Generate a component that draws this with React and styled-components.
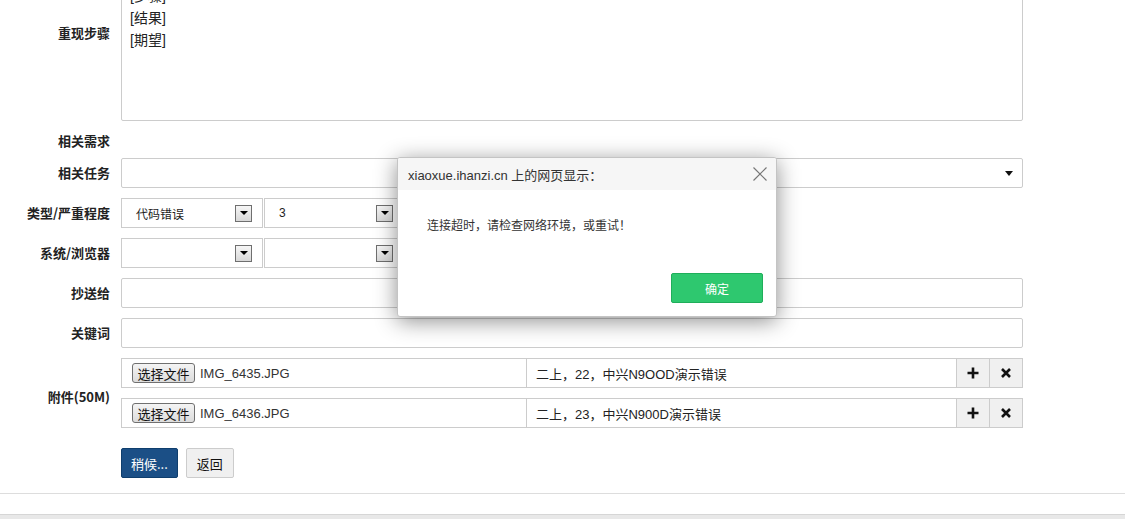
import styled, { createGlobalStyle } from 'styled-components';

const GlobalStyle = createGlobalStyle`
  html, body {
    margin: 0;
    padding: 0;
    background: #fff;
  }
  body {
    font-family: 'Liberation Sans', 'Noto Sans CJK SC', sans-serif;
    color: #333;
    font-size: 13px;
  }
`;

const Page = styled.div`
  position: relative;
  width: 1125px;
  height: 519px;
  overflow: hidden;
  background: #fff;
`;

const Form = styled.div`
  display: flex;
  flex-direction: column;
  gap: 10px;
  margin-top: -24px;
`;

const Row = styled.div`
  display: grid;
  grid-template-columns: 121px 902px;
  align-items: ${({ top }) => (top ? 'start' : 'center')};
  height: ${({ h }) => (h ? `${h}px` : 'auto')};
  min-height: ${({ h }) => (h ? '0' : '30px')};
  margin-top: ${({ mt }) => (mt ? `${mt}px` : '0')};
`;

const Label = styled.div`
  text-align: right;
  padding-right: 11px;
  padding-top: ${({ pt }) => (pt ? `${pt}px` : '0')};
  font-family: 'Noto Sans CJK SC', sans-serif;
  font-weight: bold;
  font-size: 13px;
  line-height: 20px;
  color: #222;
  white-space: nowrap;
`;

const TextArea = styled.textarea`
  display: block;
  box-sizing: border-box;
  width: 902px;
  height: 145px;
  margin: 0;
  padding: 8px 8px;
  border: 1px solid #ccc;
  border-radius: 2px;
  resize: none;
  outline: none;
  font-family: 'Liberation Sans', 'Noto Sans CJK SC', sans-serif;
  font-size: 14px;
  line-height: 22px;
  color: #222;
`;

const Input = styled.div`
  box-sizing: border-box;
  width: 902px;
  height: 30px;
  border: 1px solid #ccc;
  border-radius: 2px;
  background: #fff;
`;

const ChosenSelect = styled(Input)`
  display: flex;
  align-items: center;
  justify-content: flex-end;
  padding-right: 9px;
`;

const Caret = styled.span`
  width: 0;
  height: 0;
  border-left: 4px solid transparent;
  border-right: 4px solid transparent;
  border-top: 5px solid #111;
`;

const SelectGroup = styled.div`
  display: flex;
  gap: 1px;
`;

const Select = styled.div`
  box-sizing: border-box;
  width: ${({ w }) => w}px;
  height: 30px;
  border: 1px solid #ccc;
  display: flex;
  align-items: center;
  justify-content: space-between;
  padding: 0 10px 0 14px;
  font-family: 'Liberation Sans', 'Noto Sans CJK SC', sans-serif;
  font-size: 12px;
  color: #222;
  background: #fff;
`;

const ArrowBox = styled.span`
  box-sizing: border-box;
  width: 17px;
  height: 17px;
  border: 1px solid #6f6f6f;
  background: linear-gradient(#f6f6f6, #d8d8d8);
  display: flex;
  align-items: center;
  justify-content: center;
  &::after {
    content: '';
    border-left: 4px solid transparent;
    border-right: 4px solid transparent;
    border-top: 4px solid #000;
  }
`;

const AttachList = styled.div`
  display: flex;
  flex-direction: column;
  gap: 10px;
`;

const AttachRow = styled.div`
  box-sizing: border-box;
  width: 902px;
  height: 30px;
  display: flex;
  border: 1px solid #ccc;
`;

const FileCell = styled.div`
  width: 405px;
  display: flex;
  align-items: center;
  padding-left: 10px;
  box-sizing: border-box;
  border-right: 1px solid #ccc;
  font-size: 13px;
  color: #333;
`;

const FileButton = styled.span`
  box-sizing: border-box;
  width: 63px;
  height: 20px;
  margin-right: 5px;
  border: 1px solid #707070;
  border-radius: 3px;
  background: linear-gradient(#f4f4f4, #dcdcdc);
  display: flex;
  align-items: center;
  justify-content: center;
  font-family: 'Noto Sans CJK SC', sans-serif;
  font-size: 13px;
  color: #111;
`;

const DescCell = styled.div`
  flex: 1;
  display: flex;
  align-items: center;
  padding-left: 9px;
  font-size: 13px;
  color: #222;
`;

const IconButton = styled.div`
  width: 32px;
  display: flex;
  align-items: center;
  justify-content: center;
  background: #f0f0f0;
  border-left: 1px solid #ccc;
`;

const Actions = styled.div`
  display: flex;
  gap: 8px;
`;

const Button = styled.div`
  box-sizing: border-box;
  height: 30px;
  padding: 0 ${({ px }) => px}px;
  display: flex;
  align-items: center;
  border-radius: 2px;
  font-family: 'Noto Sans CJK SC', sans-serif;
  font-size: 13px;
  border: 1px solid ${({ primary }) => (primary ? '#0f3e6d' : '#ccc')};
  background: ${({ primary }) => (primary ? '#1b4f86' : '#f0f0f0')};
  color: ${({ primary }) => (primary ? '#fff' : '#111')};
`;

const Divider = styled.div`
  margin-top: 15px;
  height: 1px;
  background: #ddd;
`;

const FooterBar = styled.div`
  margin-top: 20px;
  height: 10px;
  border-top: 1px solid #d6d6d6;
  background: #e8e8e8;
`;

const Dialog = styled.div`
  position: absolute;
  left: 397px;
  top: 157px;
  width: 380px;
  height: 160px;
  box-sizing: border-box;
  border: 1px solid #c4c4c4;
  border-radius: 3px;
  background: #fff;
  box-shadow: 0 4px 22px rgba(0, 0, 0, 0.45);
  display: flex;
  flex-direction: column;
  overflow: hidden;
`;

const DialogHeader = styled.div`
  height: 32px;
  background: #f6f6f6;
  display: flex;
  align-items: center;
  justify-content: space-between;
  padding: 0 9px 0 10px;
  font-family: 'Liberation Sans', 'Noto Sans CJK SC', sans-serif;
  font-size: 13px;
  color: #333;
`;

const DialogBody = styled.div`
  flex: 1;
  padding: 26px 0 0 29px;
  font-family: 'Noto Sans CJK SC', sans-serif;
  font-size: 12px;
  color: #333;
`;

const DialogFooter = styled.div`
  display: flex;
  justify-content: flex-end;
  padding: 0 13px 13px 0;
`;

const OkButton = styled.div`
  box-sizing: border-box;
  width: 92px;
  height: 30px;
  border: 1px solid #1fae5a;
  border-radius: 2px;
  background: #2ec86f;
  color: #fff;
  display: flex;
  align-items: center;
  justify-content: center;
  font-family: 'Noto Sans CJK SC', sans-serif;
  font-size: 12px;
`;

const PlusIcon = () => (
  <svg width="12" height="12" viewBox="0 0 12 12">
    <path d="M6 0.5v11M0.5 6h11" stroke="#111" strokeWidth="2.6" />
  </svg>
);

const TimesIcon = () => (
  <svg width="10" height="10" viewBox="0 0 10 10">
    <path d="M1 1l8 8M9 1l-8 8" stroke="#111" strokeWidth="2.6" />
  </svg>
);

const CloseIcon = () => (
  <svg width="14" height="14" viewBox="0 0 14 14">
    <path d="M0.5 0.5l13 13M13.5 0.5l-13 13" stroke="#777" strokeWidth="1.2" />
  </svg>
);

const attachments = [
  { file: 'IMG_6435.JPG', desc: '二上，22，中兴N9OOD演示错误' },
  { file: 'IMG_6436.JPG', desc: '二上，23，中兴N900D演示错误' },
];

const App = () => {
  return (
    <Page>
      <GlobalStyle />
      <Form>
        <Row top h={145}>
          <Label pt={47}>重现步骤</Label>
          <TextArea readOnly value={'[步骤]\n[结果]\n[期望]'} />
        </Row>
        <Row h={17}>
          <Label>相关需求</Label>
          <div />
        </Row>
        <Row>
          <Label>相关任务</Label>
          <ChosenSelect>
            <Caret />
          </ChosenSelect>
        </Row>
        <Row>
          <Label>类型/严重程度</Label>
          <SelectGroup>
            <Select w={142}>代码错误<ArrowBox /></Select>
            <Select w={140}>3<ArrowBox /></Select>
            <Select w={140}><span /><ArrowBox /></Select>
          </SelectGroup>
        </Row>
        <Row>
          <Label>系统/浏览器</Label>
          <SelectGroup>
            <Select w={142}><span /><ArrowBox /></Select>
            <Select w={140}><span /><ArrowBox /></Select>
          </SelectGroup>
        </Row>
        <Row>
          <Label>抄送给</Label>
          <Input />
        </Row>
        <Row>
          <Label>关键词</Label>
          <Input />
        </Row>
        <Row>
          <Label pt={8}>附件(50M)</Label>
          <AttachList>
            {attachments.map((a) => (
              <AttachRow key={a.file}>
                <FileCell>
                  <FileButton>选择文件</FileButton>
                  {a.file}
                </FileCell>
                <DescCell>{a.desc}</DescCell>
                <IconButton><PlusIcon /></IconButton>
                <IconButton><TimesIcon /></IconButton>
              </AttachRow>
            ))}
          </AttachList>
        </Row>
        <Row mt={10}>
          <div />
          <Actions>
            <Button primary px={9}>稍候...</Button>
            <Button px={10}>返回</Button>
          </Actions>
        </Row>
      </Form>
      <Divider />
      <FooterBar />

      <Dialog>
        <DialogHeader>
          <span>xiaoxue.ihanzi.cn 上的网页显示：</span>
          <CloseIcon />
        </DialogHeader>
        <DialogBody>连接超时，请检查网络环境，或重试！</DialogBody>
        <DialogFooter>
          <OkButton>确定</OkButton>
        </DialogFooter>
      </Dialog>
    </Page>
  );
};

export default App;
